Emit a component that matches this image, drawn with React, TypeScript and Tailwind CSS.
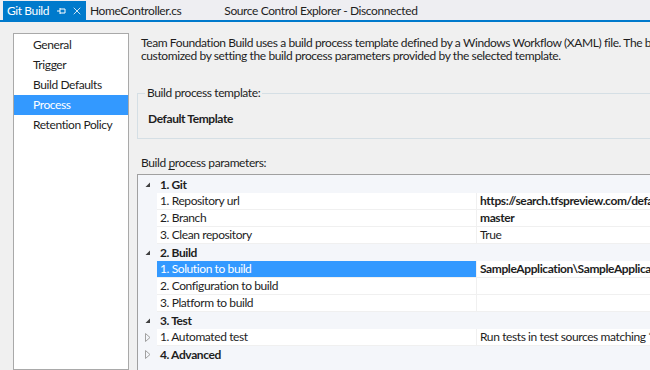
import { X } from "lucide-react";

const font = { fontFamily: 'Lato, "Noto Sans", sans-serif' };

type Row =
  | { kind: "cat"; label: string; open: boolean }
  | { kind: "item"; label: string; value?: string; bold?: boolean; selected?: boolean; expander?: boolean };

const rows: Row[] = [
  { kind: "cat", label: "1. Git", open: true },
  { kind: "item", label: "1. Repository url", value: "https://search.tfspreview.com/defaultcollection/_git/SampleApplication", bold: true },
  { kind: "item", label: "2. Branch", value: "master", bold: true },
  { kind: "item", label: "3. Clean repository", value: "True" },
  { kind: "cat", label: "2. Build", open: true },
  { kind: "item", label: "1. Solution to build", value: "SampleApplication\\SampleApplication.sln", bold: true, selected: true },
  { kind: "item", label: "2. Configuration to build" },
  { kind: "item", label: "3. Platform to build" },
  { kind: "cat", label: "3. Test", open: true },
  { kind: "item", label: "1. Automated test", value: "Run tests in test sources matching **\\*test*.dll", expander: true },
  { kind: "cat", label: "4. Advanced", open: false },
];

const navItems = ["General", "Trigger", "Build Defaults", "Process", "Retention Policy"];

function Expanded() {
  return (
    <svg width="6" height="6" viewBox="0 0 6 6" className="block">
      <polygon points="5,0.5 5,5 0.5,5" fill="#404040" />
    </svg>
  );
}

function Collapsed() {
  return (
    <svg width="6" height="9" viewBox="0 0 6 9" className="block">
      <polygon points="0.5,0.5 5,4.5 0.5,8.5" fill="none" stroke="#a0a0a0" strokeWidth="1" />
    </svg>
  );
}

function PinIcon() {
  return (
    <svg width="10" height="10" viewBox="0 0 10 10" className="block">
      <path d="M0 5h3M3 2v6M3 3h5M3 7h5M8 3v4" stroke="#ffffff" strokeWidth="1" fill="none" />
    </svg>
  );
}

export default function App() {
  return (
    <div
      className="flex h-[370px] w-[650px] flex-col overflow-hidden bg-[#f0f0f0] text-[12px] tracking-[-0.4px] text-[#1e1e1e]"
      style={font}
    >
      {/* document tabs */}
      <div className="flex h-[22px] shrink-0 items-end whitespace-nowrap border-b-2 border-[#007acc] bg-[#eeeef2]">
        <div className="ml-[3px] flex h-[19px] w-[83px] items-center bg-[#007acc] pl-[4px] text-white">
          <span>Git Build</span>
          <span className="ml-[8px]"><PinIcon /></span>
          <X size={12} strokeWidth={1.6} className="ml-[4px] text-white" />
        </div>
        <div className="flex h-[19px] items-center pl-[4px] text-[#1e1e1e]">HomeController.cs</div>
        <div className="ml-[43px] flex h-[19px] items-center text-[#1e1e1e]">Source Control Explorer - Disconnected</div>
      </div>

      <div className="flex min-h-0 flex-1">
        {/* left nav */}
        <div className="ml-[13px] mt-[11px] w-[116px] shrink-0 whitespace-nowrap border border-[#a9a9a9] bg-white pt-[1px]">
          {navItems.map((n) => (
            <div
              key={n}
              className={`flex h-[20px] items-center pl-[19px] ${n === "Process" ? "bg-[#3399ff] text-white" : ""}`}
            >
              {n}
            </div>
          ))}
        </div>

        {/* content */}
        <div className="ml-[8px] flex min-w-0 flex-1 flex-col whitespace-nowrap">
          <div className="ml-[4px] mt-[14px] leading-[13px]">
            <div>Team Foundation Build uses a build process template defined by a Windows Workflow (XAML) file. The behavior of this template can be</div>
            <div>customized by setting the build process parameters provided by the selected template.</div>
          </div>

          {/* group box */}
          <div className="relative mt-[31px] h-[46px] border border-r-0 border-[#d5dfe5]">
            <span className="absolute left-[7px] top-[-8px] bg-[#f0f0f0] px-[2px] leading-[14px]">Build process template:</span>
            <div className="ml-[10px] mt-[16px] font-bold">Default Template</div>
          </div>

          <div className="ml-[4px] mt-[17px] leading-[14px]">
            Build <span className="underline underline-offset-2">p</span>rocess parameters:
          </div>

          {/* property grid */}
          <div className="mt-[4px] flex-1 border-l border-t border-[#a0a0a0] bg-[#f4f6fa] pt-[1px]">
            {rows.map((r, i) =>
              r.kind === "cat" ? (
                <div key={i} className="flex h-[17px] items-center">
                  <div className="flex w-[19px] items-center justify-center pl-[1px]">
                    {r.open ? <Expanded /> : <Collapsed />}
                  </div>
                  <span className="pl-[3px] font-bold">{r.label}</span>
                </div>
              ) : (
                <div key={i} className="flex h-[17px] items-center">
                  <div className="flex w-[19px] items-center justify-center pl-[1px]">
                    {r.expander ? <Collapsed /> : null}
                  </div>
                  <div
                    className={`flex h-full w-[319px] shrink-0 items-center border-b border-[#f0f0f0] pl-[3px] ${
                      r.selected ? "bg-[#3399ff] text-white" : "bg-white"
                    }`}
                  >
                    {r.label}
                  </div>
                  <div
                    className={`flex h-full min-w-0 flex-1 items-center overflow-hidden border-b border-l border-[#f0f0f0] bg-white pl-[3px] ${
                      r.bold ? "font-bold" : ""
                    }`}
                  >
                    {r.value}
                  </div>
                </div>
              )
            )}
          </div>
        </div>
      </div>
    </div>
  );
}
